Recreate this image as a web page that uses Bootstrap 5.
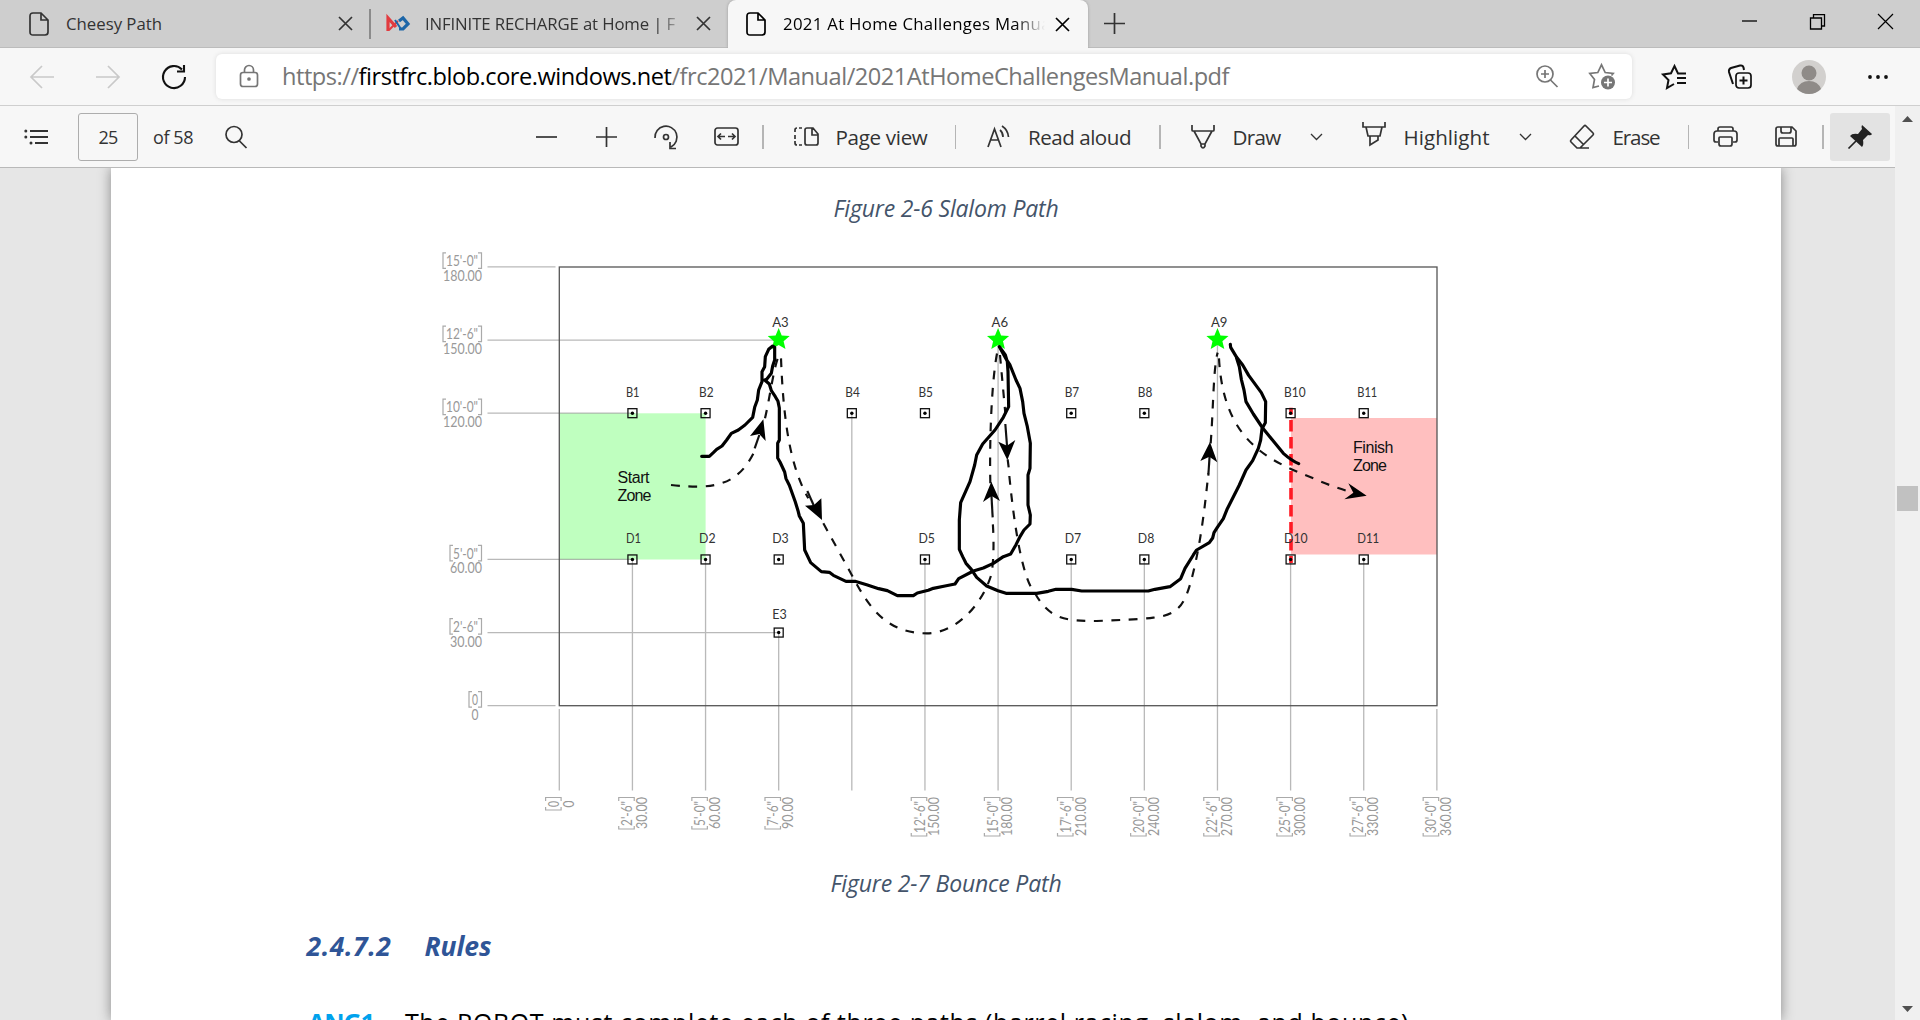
<!DOCTYPE html>
<html lang="en">
<head>
<meta charset="utf-8">
<title>2021 At Home Challenges Manual</title>
<link rel="stylesheet" href="https://cdn.jsdelivr.net/npm/bootstrap@5.3.0/dist/css/bootstrap.min.css">
<style>
body{width:1920px;height:1020px;overflow:hidden;background:#e6e6e6;font-family:"Open Sans","Noto Sans",sans-serif;color:#333}
svg{display:block;flex:none;overflow:visible;fill:none;stroke:currentColor;stroke-width:1.7}
.lbl{white-space:nowrap;flex:none;display:block}
.tabstrip{height:48px;background:#cecece;border-bottom:1px solid #bcbcbc;font-size:16.8px;line-height:48px}
.tab-a{width:370px;padding-left:29px;padding-right:18px}
.tab-b{width:358px;padding-left:16px;padding-right:18px;position:relative}
.tab-b::before{content:"";align-self:center;width:2px;height:30px;background:#8b8b8b;margin-left:-17px;margin-right:15px}
.tab-c{width:360px;height:48px;background:#f7f7f7;border-radius:8px 8px 0 0;padding-left:18px;padding-right:19px;color:#000;box-shadow:0 0 3px #999;clip-path:inset(0 -4px 0 -4px)}
.cut{overflow:hidden;-webkit-mask-image:linear-gradient(90deg,#000 calc(100% - 30px),transparent)}
.addr{height:58px;background:#f7f7f7;border-bottom:1px solid #cfcfcf;padding-left:30px;color:#111}
.urlbox{width:1416px;height:45px;margin-left:30px;margin-top:-1px;background:#fff;border-radius:6px;box-shadow:0 0 5px #0000001c;padding:0 17px 0 24px;font-size:23.6px;color:#767676}
.urlbox b{font-weight:400;color:#000}
.urlbox .lbl{margin-top:1px}
.view{height:914px}
.tools{height:62px;background:#f7f7f7;border-bottom:1px solid #b9b9b9;padding-left:24px;font-size:20.6px;color:#333}
.tools .lbl{margin-top:1px}
.pg{width:60px;height:48px;border:1px solid #adadad;border-radius:3px;font-size:18px;background:#f7f7f7}
.bar{width:1.5px;height:24px;background:#b5b5b5;flex:none}
.pin{width:60px;height:48px;background:#e3e3e3;border-radius:3px;color:#222}
.sheet{width:1670px;height:852px;margin-left:111px;background:#fff;box-shadow:0 0 12px #888;overflow:hidden}
.canvas{height:852px;overflow:hidden}
.cap{font-style:italic;font-size:23px;line-height:30px;color:#44546a}
.scroller{width:25px;height:914px;background:#f0f0f0;padding:10px 0 8px}
.thumb{width:21px;height:25px;background:#c1c1c1;margin-top:364px}
.h4x{font:italic 700 26.5px/36px "Open Sans",sans-serif;color:#2f5597;padding-left:195.5px;margin-top:30px}
.rule-line{font-size:25px;line-height:34px;color:#000;padding-left:197px;margin-top:41px}
.rule-line b{color:#00a2ed}
.fig text{stroke:none;font-family:Lato,sans-serif}
</style>
<script src="https://cdn.jsdelivr.net/npm/bootstrap@5.3.0/dist/js/bootstrap.bundle.min.js"></script>
</head>
<body>
<!-- tab strip -->
<div class="tabstrip d-flex">
  <div class="tab-a d-flex align-items-center">
    <svg width="20" height="24"><path d="M4 1h8l7 7v12q0 3-3 3H4q-3 0-3-3V4q0-3 3-3zM12 1v7h7"/></svg>
    <span class="lbl" style="margin-left:17px" data-w="96">Cheesy Path</span>
    <svg class="ms-auto" width="13" height="13"><path d="M0 0L13 13M13 0L0 13"/></svg>
  </div>
  <div class="tab-b d-flex align-items-center">
    <svg width="24" height="16"><path style="stroke:#e23b3f;stroke-width:3.2" d="M2 15V2l8 9"/><path style="stroke:#1c66a8;stroke-width:3.2" d="M13 5l4-3 5 6-5 5h-4"/><path style="stroke:#e23b3f;stroke-width:2" d="M3 14l9-9"/><path style="stroke:#1c66a8;stroke-width:2" d="M9 4l6 9"/></svg>
    <div class="cut" style="width:261px;margin-left:15px"><span class="lbl" data-w="257">INFINITE RECHARGE at Home | F</span></div>
    <svg class="ms-auto" width="13" height="13"><path d="M0 0L13 13M13 0L0 13"/></svg>
  </div>
  <div class="tab-c d-flex align-items-center">
    <svg width="20" height="24"><path d="M4 1h8l7 7v12q0 3-3 3H4q-3 0-3-3V4q0-3 3-3zM12 1v7h7"/></svg>
    <div class="cut" style="width:262px;margin-left:17px"><span class="lbl" data-w="271">2021 At Home Challenges Manual</span></div>
    <svg class="ms-auto" width="13" height="13"><path d="M0 0L13 13M13 0L0 13"/></svg>
  </div>
  <div class="d-flex align-items-center flex-grow-1" style="padding-left:16px">
    <svg width="21" height="21"><path d="M10.500 0v21M0 10.500h21"/></svg>
    <div class="d-flex ms-auto align-items-center" style="padding:0 27px 5px 0;gap:53px;color:#000">
      <svg width="15" height="15"><path stroke-width="1.300" d="M0 7h15"/></svg>
      <svg width="15" height="15"><path stroke-width="1.300" d="M.5 4h11v11H.5zM3.500 4V.7h11V12h-3"/></svg>
      <svg width="15" height="15"><path stroke-width="1.200" d="M0 0l15 15M15 0L0 15"/></svg>
    </div>
  </div>
</div>
<!-- address bar -->
<div class="addr d-flex align-items-center">
  <svg width="24" height="22" style="color:#c9c9c9"><path d="M24 11H1M12 0L1 11l11 11"/></svg>
  <svg width="24" height="22" style="color:#c9c9c9;margin-left:42px"><path d="M0 11h23M12 0l11 11-11 11"/></svg>
  <svg width="24" height="24" style="margin:0 0 0 42px"><path stroke-width="2.100" d="M20 4.500A11 11 0 1 0 23 12M22 0v6.500h-7"/></svg>
  <div class="urlbox d-flex align-items-center">
    <svg width="18" height="22" stroke-width="1.500"><path d="M3 7.500h12q2.500 0 2.500 2.500v9q0 2.500-2.500 2.500H3Q.5 21.500.5 19v-9Q.5 7.500 3 7.500zM4.500 7.500V5a4.500 4.500 0 0 1 9 0v2.500"/><circle cx="9" cy="14" r="1" fill="currentColor"/></svg>
    <span class="lbl" style="margin-left:24px" data-w="947">https://<b>firstfrc.blob.core.windows.net</b>/frc2021/Manual/2021AtHomeChallengesManual.pdf</span>
    <svg class="ms-auto" width="22" height="22"><circle cx="9" cy="9" r="8"/><path d="M14.500 15l7 7M9 5v8M5 9h8"/></svg>
    <svg width="26" height="25" style="margin-left:31px"><path d="M10 22l-6 1.500 1.500-8L.8 9.500l8-1L12.500.8l3.700 7.700 8 1-1.700 2"/><circle cx="19" cy="18.500" r="7" style="fill:currentColor;stroke:none"/><path style="stroke:#fff" d="M19 14.500v8M15 18.500h8"/></svg>
  </div>
  <svg width="24" height="24" style="margin-left:30px"><path stroke-width="2" d="M12 19l-7 4 1.500-8L1 9.500l8-1.200L12.500 1 16 8.500h8M15 13h9M15 18h9"/></svg>
  <svg width="24" height="24" style="margin-left:42px"><path stroke-width="2" d="M5 19L1 7q-.5-3 2-4l9-2.500q3-.5 3.500 2l.5 2.500"/><rect x="8" y="8" width="15" height="15" rx="3"/><path stroke-width="2" d="M15.500 11.500v8M11.500 15.500h8"/></svg>
  <svg width="34" height="34" style="margin-left:40px"><circle cx="17" cy="17" r="17" fill="#d2d0ce" stroke="none"/><circle cx="17" cy="13" r="7.500" fill="#8f8b88" stroke="none"/><path fill="#8f8b88" stroke="none" d="M5 29q3-8 12-8t12 8q-5 5-12 5T5 29z"/></svg>
  <svg width="20" height="4" style="margin-left:42px"><g fill="currentColor" stroke="none"><circle cx="2" cy="2" r="1.900"/><circle cx="10" cy="2" r="1.900"/><circle cx="18" cy="2" r="1.900"/></g></svg>
</div>
<div class="view d-flex">
<div style="width:1895px">
<!-- PDF toolbar -->
<div class="tools d-flex align-items-center">
  <svg width="24" height="16"><path stroke-width="2" d="M6 2h18M6 8h18M11 14h13"/><g fill="currentColor" stroke="none"><circle cx="1.800" cy="2" r="1.500"/><circle cx="1.800" cy="8" r="1.500"/><circle cx="7" cy="14" r="1.500"/></g></svg>
  <div class="pg d-flex align-items-center justify-content-center" style="margin-left:30px"><span class="lbl" data-w="19">25</span></div>
  <span class="lbl" style="margin-left:15px;font-size:18px" data-w="40">of 58</span>
  <svg width="22" height="22" style="margin-left:32px"><circle cx="9" cy="8.500" r="8"/><path d="M14 14.500l7.500 7.500"/></svg>
  <svg width="21" height="20" style="margin-left:289px"><path d="M0 10h21"/></svg>
  <svg width="21" height="20" style="margin-left:39px"><path d="M10.500 0v20M0 10h21"/></svg>
  <svg width="24" height="24" style="margin-left:37px"><path d="M1 13A11 11 0 1 1 17 22M16 17v6.500h6"/><circle cx="12" cy="12" r="2.500"/></svg>
  <svg width="25" height="19" style="margin-left:36px"><rect x="1" y="1" width="23" height="17" rx="2.500"/><path d="M4.500 9.500H11M7 6.500L4 9.500l3 3M14 9.500h6.500M18 6.500l3 3-3 3"/></svg>
  <i class="bar" style="margin-left:23px"></i>
  <svg width="25" height="19" style="margin-left:30px"><path d="M13 1h6l5 6v9q0 2-2 2h-9q-2 0-2-2V3q0-2 2-2zM18 1v7h6M8 1H5M1 5V3q0-2 2-2M1 8v4M8 18H5M1 14v2q0 2 2 2"/></svg>
  <span class="lbl" style="margin-left:17px" data-w="92">Page view</span>
  <i class="bar" style="margin-left:27px"></i>
  <svg width="23" height="22" style="margin-left:31px"><path d="M1 21L7.500 3 14 21M3.500 14h8M13 4q3 2.500 3 7M15 0q6 4 6.500 11"/></svg>
  <span class="lbl" style="margin-left:18px" data-w="103">Read aloud</span>
  <i class="bar" style="margin-left:28px"></i>
  <svg width="24" height="24" style="margin-left:30px"><path d="M1 0v5q0 1 1 1h20q1 0 1-1V0M3 6l7 13h4l7-13M10 19v2q2 4 4 0v-2"/></svg>
  <span class="lbl" style="margin-left:18px" data-w="48">Draw</span>
  <svg width="11" height="6" style="margin-left:30px"><path stroke-width="1.300" style="stroke-width:1.300" d="M0 0l5.500 5.500L11 0"/></svg>
  <svg width="24" height="24" style="margin:-6px 0 0 40px"><path d="M1 0v5h22V0M4 5l2 9h12l2-9M8 14v9l8-5v-4"/></svg>
  <span class="lbl" style="margin-left:18px" data-w="86">Highlight</span>
  <svg width="11" height="6" style="margin-left:30px"><path style="stroke-width:1.300" d="M0 0l5.500 5.500L11 0"/></svg>
  <svg width="24" height="24" style="margin-left:39px"><path d="M16 1l7 7q1 1 0 2L10 23H7l-6-6q-1-1 0-2L14 1q1-1 2 0zM5 11l9 9M7 23h12"/></svg>
  <span class="lbl" style="margin-left:19px" data-w="47">Erase</span>
  <i class="bar" style="margin-left:28px"></i>
  <svg width="25" height="21" style="margin-left:24px"><path d="M5 16H3q-2 0-2-2V8q0-3 3-3h17q3 0 3 3v6q0 2-2 2h-2M5 5V3q0-2 2-2h11q2 0 2 2v2M7 11h11q1 0 1 1v6q0 2-2 2H8q-2 0-2-2v-6q0-1 1-1z"/></svg>
  <svg width="22" height="21" style="margin-left:37px"><path d="M3 1h14l4 4v13q0 2-2 2H3q-2 0-2-2V3q0-2 2-2zM6 1v4q0 2 2 2h6q2 0 2-2V1M4 20v-7q0-1 1-1h12q1 0 1 1v7"/></svg>
  <i class="bar" style="margin-left:25px"></i>
  <div class="pin d-flex align-items-center justify-content-center" style="margin-left:6px"><svg width="24" height="24"><path fill="currentColor" stroke="none" d="M14 0l10 9q-1 2-4 1l-5 5q1 5-1 7L2 11q2-3 8-2l4-5q-1-2 0-4z"/><path d="M8 16L.5 23.500"/></svg></div>
</div>
<!-- document -->
<div class="canvas"><div class="sheet">
  <div class="cap d-flex justify-content-center" style="padding-top:25px;margin-bottom:1px"><span class="lbl" data-w="225">Figure 2-6 Slalom Path</span></div>
  <svg class="fig" width="1670" height="631" viewBox="111 224 1670 631" id="field">
    <rect x="559.300" y="413.300" width="146.300" height="146.200" fill="#bfffbf" stroke="none"/>
    <rect x="1291" y="418" width="146" height="136.500" fill="#ffbfbf" stroke="none"/>
    <g id="grid" stroke="#808080" stroke-opacity=".55" stroke-width="1.300"></g>
    <rect x="559.300" y="267" width="877.700" height="438.700" stroke="#555" stroke-width="1.300"/>
    <path d="M1291 407.700V563" stroke="#ff1a24" stroke-width="3.600" stroke-dasharray="11.500 5.500" stroke-dashoffset="4.700"/>
    <g id="marks" fill="#333" stroke="#111" font-size="13.500"></g>
    <g id="dims" fill="#999" font-size="14.500"></g>
    <g id="stars" fill="#0f0" stroke="none"></g>
    <g style="font-size:16px" fill="#111">
      <text style="font-family:'Liberation Sans',sans-serif" x="617.500" y="482.500" textLength="32">Start</text><text style="font-family:'Liberation Sans',sans-serif" x="617.500" y="500.500" textLength="34">Zone</text>
      <text style="font-family:'Liberation Sans',sans-serif" x="1353" y="452.500" textLength="40.500">Finish</text><text style="font-family:'Liberation Sans',sans-serif" x="1353" y="470.500" textLength="34">Zone</text>
    </g>
    <!-- planned route -->
    <g transform="translate(800 180) scale(.33333)" stroke="#111" stroke-width="6.500" stroke-dasharray="26 26">
      <path d="M-387 915C-250 930 -180 915 -130 800"/><path stroke-dasharray="none" d="M-136 805L-122 765"/>
      <path d="M-105 715C-90 650 -80 570 -65 530"/>
      <path d="M-57 535C-50 720 -30 860 25 955"/><path stroke-dasharray="none" d="M22 933L42 978"/>
      <path d="M70 1030L150 1175C200 1270 250 1360 380 1360C470 1360 550 1270 575 1180Q585 1110 577 1010"/><path stroke-dasharray="none" d="M578 1012L574 940"/>
      <path d="M571 910C568 780 575 600 592 515"/>
      <path d="M600 525L616 700"/><path stroke-dasharray="none" d="M616 732L622 810M623 838L626 862"/>
      <path d="M628 888C645 1060 670 1200 705 1240C750 1320 800 1323 890 1323C960 1320 1020 1318 1060 1313C1130 1305 1150 1280 1170 1214C1200 1110 1215 980 1225 880"/><path stroke-dasharray="none" d="M1225 887L1229 825"/>
      <path d="M1232 790C1240 690 1240 560 1253 518"/>
      <path d="M1257 535C1270 780 1400 840 1540 895Q1590 918 1665 940"/>
    </g>
    <g transform="translate(800 180) scale(.33333)" fill="#000" stroke="none"><path d="M-110 718L-150 768L-122 762L-103 783zM66 1020L15 977L42 975L64 955zM622 840L595 785L621 797L646 780zM574 905L549 966L575 948L600 963zM1230 786L1201 843L1228 830L1252 847zM1700 947L1633 958L1660 938L1645 910z"/></g>
    <!-- driven route -->
    <g transform="translate(800 180) scale(.33333)" stroke="#000" stroke-width="9.500" stroke-linecap="round" stroke-linejoin="round">
      <path d="M-295 829H-272L-260 818L-250 808L-234 798L-220 780L-206 760L-185 750L-165 735L-142 712L-136 682L-128 660L-124 630L-114 605V575L-106 560L-104 530L-94 508L-82 498L-76 502V540L-82 558L-86 580L-100 598L-106 600L-92 612L-86 632L-74 650L-66 664L-62 684V780L-67 790V834L-60 846L-46 876L-42 896L-32 916L-14 966L-6 992L-2 1008L10 1030L12 1070L14 1110L32 1148L64 1175L88 1177L100 1186L138 1204H165L200 1214L236 1226L262 1232L292 1247H340L352 1239L385 1231L400 1225L435 1218L465 1212L476 1196L520 1173L550 1164L580 1150L610 1130L632 1122L648 1094L660 1070L672 1050L690 1032L691 1005L684 975V885L690 865L691 790L682 740L672 700L668 665L660 625L648 600L630 555L620 540L598 500L616 525L622 545L624 575L626 680L610 712L585 750L548 792L530 825L524 855L510 905L482 968L478 1020V1108L488 1130L498 1150L514 1168L530 1192L560 1218L594 1232L618 1240H710L745 1234L768 1228H815L845 1233H1045L1065 1228L1110 1220L1142 1196L1155 1165L1180 1125L1190 1110L1228 1088L1238 1074L1242 1058L1252 1042L1270 1016L1282 986L1318 915L1338 870L1358 842L1375 805L1382 780L1386 746L1396 728L1397 665L1384 638L1346 586L1328 555L1310 532L1292 502L1291 493"/>
      <path d="M1310 535L1318 560L1324 598L1332 630L1338 665L1360 702L1388 744L1450 820Q1475 842 1496 851"/>
    </g>
  </svg>
  <div class="cap d-flex justify-content-center" style="padding-top:13px"><span class="lbl" data-w="231">Figure 2-7 Bounce Path</span></div>
  <div class="h4x d-flex"><span class="lbl" data-w="85">2.4.7.2</span><span class="lbl" data-w="67" style="margin-left:33px">Rules</span></div>
  <div class="rule-line d-flex"><b class="lbl" data-w="66">ANG1</b><span class="lbl" data-w="1004" style="margin-left:31px">The ROBOT must complete each of three paths (barrel racing, slalom, and bounce)</span></div>
</div></div>
</div>
<!-- scrollbar -->
<div class="scroller d-flex flex-column align-items-center">
  <svg width="11" height="6"><path fill="#505050" stroke="none" d="M5.500 0L11 6H0z"/></svg>
  <div class="thumb"></div>
  <svg class="mt-auto" width="11" height="6"><path fill="#505050" stroke="none" d="M5.500 6L11 0H0z"/></svg>
</div>
</div>
<script>
// Field geometry: 30-inch grid
const X0 = 559.3, Y0 = 705.7, S = 73.13;
const gx = c => X0 + c * S, gy = r => Y0 - r * S;
const put = (id, h) => document.getElementById(id).innerHTML = h;

const rowEnd = {0: 555.5, 1: gx(3), 2: gx(1), 4: gx(1), 5: gx(3), 6: 555.5};
const colTop = [709, gy(2), gy(2), gy(1), gy(4), gy(2), gy(5), gy(2), gy(2), gy(5), gy(2), gy(2), 709];
let d = Object.entries(rowEnd).map(([r, x]) => `M487.500 ${gy(r)}H${x}`).join('');
d += colTop.map((y, c) => `M${gx(c)} ${y}V790.500`).join('');
put('grid', `<path d="${d}"/>`);

// Field markers and their names
const row = {B: 4, D: 2, E: 1};
put('marks', 'B1 B2 B4 B5 B7 B8 B10 B11 D1 D2 D3 D5 D7 D8 D10 D11 E3'.split(' ').map(n => {
  const x = gx(+n.slice(1)), y = gy(row[n[0]]);
  const w = {B10: 21.5, B11: 20, D10: 23.5, D11: 22, B1: 13.5, D1: 15}[n] || (n[0] === 'D' ? 16.5 : 14.5);
  return `<rect x="${x - 4.5}" y="${y - 4.5}" width="9" height="9" fill="none" stroke-width="1.300"/><circle cx="${x}" cy="${y}" r="1.700" fill="#000" stroke="none"/>` +
    `<text x="${x - 6.5}" y="${y - (n === 'E3' ? 13.5 : 16)}" textLength="${w}" lengthAdjust="spacingAndGlyphs">${n}</text>`;
}).join('') + [3, 6, 9].map(c => `<text x="${gx(c) - 6.5}" y="327" textLength="16.500" lengthAdjust="spacingAndGlyphs">A${c}</text>`).join(''));

// Dimensions along both axes: feet-inches in tall brackets, then inches
const ft = n => n ? `${Math.floor(n / 12)}'-${n % 12}"` : '0';
const inch = n => n ? n + '.00' : '0';
const t = (s, w, x, y) => `<text text-anchor="end" x="${x}" y="${y}" textLength="${w}" lengthAdjust="spacingAndGlyphs">${s}</text>`;
const dim = (n, a) => {
  const w = n ? (n > 99 ? 39 : 32) : 7, b = n ? w + 1 : 14;
  return `<g transform="${a}"><path d="M${4 - b} -13H${1 - b}V2.500H${4 - b}M-4 -13H-.500V2.500H-4" stroke="#aaa" stroke-width="1.200" fill="none"/>` +
    t(ft(n), b - 8, -4, .3) + t(inch(n), w, n ? 0 : -3.5, 15) + '</g>';
};
put('dims', [0, 1, 2, 4, 5, 6].map(r => dim(r * 30, `translate(482 ${gy(r) - 1})`)).join('') +
  [0, 1, 2, 3, 5, 6, 7, 8, 9, 10, 11, 12].map(c => dim(c * 30, `translate(${gx(c) - .7} 797) rotate(-90)`)).join(''));

put('stars', [3, 6, 9].map(c => {
  const p = [];
  for (let i = 0; i < 10; i++) {
    const r = i % 2 ? 5.2 : 11.6, a = i * Math.PI / 5;
    p.push((gx(c) + r * Math.sin(a)).toFixed(1) + ',' + (339.7 - r * Math.cos(a)).toFixed(1));
  }
  return `<polygon points="${p.join(' ')}"/>`;
}).join(''));

// Track each label to its set width
document.querySelectorAll('[data-w]').forEach(e => {
  const w = +e.dataset.w, n = e.textContent.length, now = e.getBoundingClientRect().width;
  e.style.letterSpacing = (w - now) / n + 'px';
});
</script>
</body>
</html>
